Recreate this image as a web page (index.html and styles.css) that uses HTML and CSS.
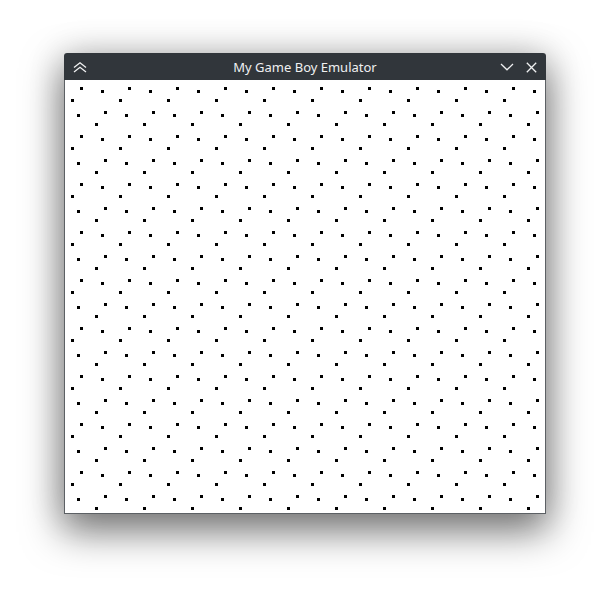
FILE: index.html
```html
<!DOCTYPE html>
<html>
<head>
<meta charset="utf-8">
<link rel="stylesheet" href="styles.css">
</head>
<body>
<div class="desktop">
  <div class="window">
    <div class="titlebar">
      <div class="tb-left">
        <svg class="icon" width="14" height="11" viewBox="0 0 14 11">
          <path d="M1 5.5 L7 0.8 L13 5.5 M1 10 L7 5.3 L13 10" fill="none" stroke="#eff0f1" stroke-width="1.3"/>
        </svg>
      </div>
      <div class="title">My Game Boy Emulator</div>
      <div class="tb-right">
        <svg class="icon" width="14" height="8" viewBox="0 0 14 8">
          <path d="M1 1 L7 6.8 L13 1" fill="none" stroke="#eff0f1" stroke-width="1.3"/>
        </svg>
        <svg class="icon" width="11" height="11" viewBox="0 0 11 11">
          <path d="M0.8 0.8 L10.2 10.2 M10.2 0.8 L0.8 10.2" fill="none" stroke="#eff0f1" stroke-width="1.3"/>
        </svg>
      </div>
    </div>
    <div class="screen">
      <svg width="480" height="432" viewBox="0 0 480 432" shape-rendering="crispEdges">
        <defs>
          <pattern id="dots" x="0" y="0" width="48" height="48" patternUnits="userSpaceOnUse">
            <rect x="15" y="6" width="3" height="3" fill="#000"/>
            <rect x="36" y="9" width="3" height="3" fill="#000"/>
            <rect x="6" y="18" width="3" height="3" fill="#000"/>
            <rect x="12" y="33" width="3" height="3" fill="#000"/>
            <rect x="39" y="30" width="3" height="3" fill="#000"/>
            <rect x="30" y="42" width="3" height="3" fill="#000"/>
          </pattern>
        </defs>
        <rect width="480" height="432" fill="#fff"/>
        <rect width="480" height="432" fill="url(#dots)"/>
      </svg>
    </div>
  </div>
</div>
</body>
</html>
```

FILE: styles.css
```css
html, body {
  margin: 0;
  padding: 0;
  background: #ffffff;
}

.desktop {
  width: 610px;
  height: 590px;
  padding: 53px 0 0 64px;
  box-sizing: border-box;
}

.window {
  width: 482px;
  display: flex;
  flex-direction: column;
  background: #ffffff;
  border-radius: 3px 3px 0 0;
  box-shadow: 0 16px 38px 2px rgba(0, 0, 0, 0.5), 0 0 36px rgba(0, 0, 0, 0.16);
}

.titlebar {
  height: 27px;
  background: #31363b;
  border-radius: 3px 3px 0 0;
  display: grid;
  grid-template-columns: 60px 1fr 60px;
  align-items: center;
  padding: 0 9px;
  box-sizing: border-box;
}

.tb-left {
  display: flex;
  align-items: center;
  padding-top: 1px;
}

.tb-right {
  display: flex;
  justify-content: flex-end;
  align-items: center;
  gap: 12px;
  padding-top: 1px;
}

.icon {
  display: block;
}

.title {
  text-align: center;
  font-family: "Noto Sans", "Open Sans", sans-serif;
  font-size: 13px;
  color: #eff0f1;
  white-space: nowrap;
}

.screen {
  border: 1px solid #5c6064;
  border-top: none;
  padding-top: 1px;
  background: #ffffff;
  line-height: 0;
}

.screen svg {
  display: block;
}
```
